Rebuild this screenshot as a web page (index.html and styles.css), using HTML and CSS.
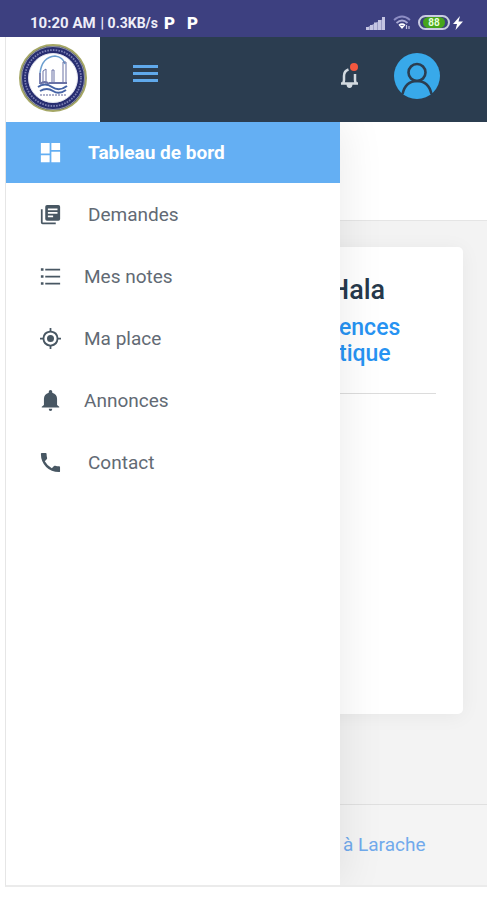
FILE: index.html
```html
<!DOCTYPE html>
<html lang="fr">
<head>
    <meta charset="UTF-8">
    <meta name="viewport" content="width=device-width, initial-scale=1.0">
    <title>Tableau de bord</title>
    <link rel="stylesheet" href="styles.css">
</head>
<body>
    <!-- Barre d'état -->
    <div class="status">
        <span class="time">10:20 AM</span>
        <span class="speed">| 0.3KB/s</span>
        <span class="app-mark">P</span>
        <span class="app-mark">P</span>
        <div class="status-right">
            <svg width="20" height="14" viewBox="0 0 20 14" fill="#c5c5e2"><path d="M0 11h3v3H0zM4 9h3v5H4zM8 6.500h3V14H8zM12 4h3v10h-3zM16 1h3v13h-3z"/><path d="M0 12 19 2v12H0z" opacity=".7"/></svg>
            <svg width="18" height="15" viewBox="0 0 18 15" fill="none" stroke-width="1.800"><path d="M1 5q8-7 16 0" stroke="#8d8dc4"/><path d="M3.500 8q5.500-5 11 0" stroke="#aaaad4"/><path d="M6 10.500q3-2.500 6 0" stroke="#fff"/><path d="m9 14-2.500-3h5z" fill="#fff"/><path d="M13.500 10v4M16 11v3" stroke="#c5c5e2" stroke-width="1.200"/></svg>
            <div class="power">
                <span class="battery">88</span>
                <svg width="10" height="14" viewBox="0 0 10 14" fill="#fff"><path d="M7 0 0 8h4l-1.500 6L10 5.500H5.500z"/></svg>
            </div>
        </div>
    </div>

    <div class="app">
        <header class="header">
            <a class="logo" href="#" aria-label="Accueil">
                <svg width="70" height="70" viewBox="0 0 70 70">
                    <circle cx="35" cy="35" r="33" fill="#272d70" stroke="#a5a765" stroke-width="2"/>
                    <circle cx="35" cy="35" r="31.500" fill="none" stroke="#d9dccb" stroke-width=".6"/>
                    <circle cx="35" cy="35" r="28" fill="none" stroke="#7c80b3" stroke-width="1.800" stroke-dasharray="1.600 1.200"/>
                    <circle cx="35" cy="35" r="24.500" fill="#fff" stroke="#e3e4ee"/>
                    <g fill="none" stroke="#6a72a5">
                        <path d="M22 30q2-16 15-17 8 1 10 8" stroke="#6c9fd0" stroke-width="1.500"/>
                        <path d="M22 30v11" stroke="#525b98" stroke-width="1.500"/>
                        <path d="M25 28v13M28 26v15M34 27v13M36 27v13M45 19v20M48 19v20M45 19h3M34 27h2M25 28l3-2"/>
                        <path d="M22 41q5-4 9 0M31 40h18" stroke-width="2"/>
                        <path d="M20 44q7-5 14 0t15-1M22 48q7-4 13 0t13-1" stroke="#4563a5" stroke-width="2"/>
                        <path d="M22 52h27" stroke="#aeb1cc" stroke-width="2" stroke-dasharray="2 1"/>
                    </g>
                </svg>
            </a>
            <button class="menu-btn" aria-label="Menu">
                <svg width="25" height="17" viewBox="0 0 25 17" fill="#60a9eb"><path d="M0 0h25v3H0zM0 7h25v3H0zM0 14h25v3H0z"/></svg>
            </button>
            <div class="header-right">
                <button class="bell-btn" aria-label="Notifications">
                    <svg width="20" height="26" viewBox="0 0 20 26"><path d="M3 20q1-1 1-3v-4q0-5 4.500-6.500M15 11v6q0 2 1 3M1 20.500h17" fill="none" stroke="#d3dae0" stroke-width="2.500"/><path d="M6.500 21h6q0 4-3 4t-3-4z" fill="#d3dae0"/><circle cx="14" cy="4" r="4" fill="#f4583f"/></svg>
                </button>
                <button class="avatar" aria-label="Profil">
                    <svg width="46" height="46" viewBox="0 0 46 46"><circle cx="23" cy="23" r="23" fill="#38a9ea"/><g fill="none" stroke="#2b3d50" stroke-width="2.600"><circle cx="23" cy="19.500" r="8.500"/><path d="M8.500 41q3-13 14.500-13t14.500 13"/></g></svg>
                </button>
            </div>
        </header>

        <div class="content">
            <!-- Menu latéral -->
            <nav class="sidebar">
                <a class="item wide active" href="#">
                    <svg viewBox="0 0 24 24"><path d="M1 1h10v12H1zM1 15h10v8H1zM13 1h10v8H13zM13 11h10v12H13z"/></svg>
                    Tableau de bord
                </a>
                <a class="item wide" href="#">
                    <svg viewBox="0 0 24 24"><path d="M4 6H1v15q0 2 2 2h15v-2H3V6zM21 1H8Q6 1 6 3v14q0 2 2 2h13q2 0 2-2V3q0-2-2-2zM20 11H9V9h11zM15 15H9v-2h6zM20 7H9V5h11z" fill-rule="evenodd"/></svg>
                    Demandes
                </a>
                <a class="item" href="#">
                    <svg viewBox="0 0 24 24"><path d="M6 3h17v2H6zM6 11h17v2H6zM6 19h17v2H6zM1 2.500h3v3H1zM1 10.500h3v3H1zM1 18.500h3v3H1z"/></svg>
                    Mes notes
                </a>
                <a class="item" href="#">
                    <svg viewBox="0 0 24 24"><path d="M12 8a4 4 0 1 0 0 8 4 4 0 0 0 0-8zm9 3A9 9 0 0 0 13 3V0h-2v3a9 9 0 0 0-8 8H0v2h3a9 9 0 0 0 8 8v3h2v-3a9 9 0 0 0 8-8h3v-2zm-9 8a7 7 0 1 1 0-14 7 7 0 0 1 0 14z"/></svg>
                    Ma place
                </a>
                <a class="item" href="#">
                    <svg viewBox="0 0 24 24"><path d="M12 24q2 0 2-2.500h-4q0 2.500 2 2.500zM19.500 17v-7q0-5.500-5.500-7V2q0-2-2-2t-2 2v1q-5.500 1.500-5.500 7v7L2 19v1h20v-1z"/></svg>
                    Annonces
                </a>
                <a class="item wide" href="#">
                    <svg viewBox="0 0 24 24"><path d="M5.500 10.500q3 5.500 8 8l2.500-2.500q.6-.6 1.400-.2 2 .6 4.500.6 1 0 1 1v4.500q0 1-1 1Q13 23 7 17T1 2q0-1 1-1h4.500q1 0 1 1 0 2.500.6 4.500.2.800-.2 1.400z"/></svg>
                    Contact
                </a>
            </nav>

            <div class="topbar"></div>
            <main class="page">
                <section class="card">
                    <h1>Hala</h1>
                    <h2>ences<br>tique</h2>
                    <hr>
                </section>
            </main>
            <footer class="footer"><a href="#">à Larache</a></footer>
        </div>
    </div>
</body>
</html>
```
FILE: styles.css
```css
* { box-sizing: border-box; }
body { margin: 0; background: #fff; font-family: Roboto, sans-serif; color: #5f6872; }
a { text-decoration: none; }
button { background: none; border: none; padding: 0; cursor: pointer; }
svg { display: block; flex: none; }

/* Barre d'état */
.status { display: flex; align-items: center; height: 37px; padding: 8px 24px 0 30px; background: #3d4080; color: #eeeef8; font-weight: 700; white-space: nowrap; }
.time { margin-right: 5px; font-size: 15px; }
.speed { margin-right: 6px; font-size: 14px; }
.app-mark { width: 23px; color: #fff; font-size: 17px; font-weight: 900; }
.status-right { display: flex; align-items: center; gap: 7px; margin-left: auto; }
.power { display: flex; align-items: center; gap: 3px; }
.battery { width: 32px; height: 15px; border: 2px solid #c9cbe2; border-radius: 8px; background: #46a51b; box-shadow: inset 3px 0 #3d4080, inset -3px 0 #3d4080; color: #e5ffd9; font-size: 10px; font-weight: 700; line-height: 11px; text-align: center; }

.app { margin-left: 5px; border-left: 1px solid #e6e6e6; border-bottom: 2px solid #ebebeb; }

/* En-tête */
.header { display: flex; align-items: center; height: 85px; background: #2b3d50; }
.logo { display: flex; justify-content: center; width: 94px; height: 85px; padding-top: 6px; background: #fff; }
.menu-btn { margin: 0 0 12px 33px; }
.header-right { display: flex; align-items: center; gap: 34px; margin: 0 47px 8px auto; }

/* Menu latéral */
.content { position: relative; }
.sidebar { position: absolute; top: 0; bottom: 0; left: 0; width: 334px; background: #fff; box-shadow: 4px 0 40px rgba(0, 0, 0, .08); clip-path: inset(0 -60px 0 0); }
.item { display: flex; align-items: center; gap: 23px; height: 60px; margin-bottom: 2px; padding-left: 34px; color: #626a74; font-size: 19px; }
.item.wide { gap: 27px; }
.item svg { width: 21px; height: 21px; fill: #485763; }
.item.active { height: 61px; margin-bottom: 1px; background: #64aff3; color: #fff; font-weight: 700; }
.item.active svg { fill: #fff; }

/* Contenu */
.topbar { height: 99px; background: #fff; border-bottom: 1px solid #e5e5e5; }
.page { padding: 26px 24px 90px; background: #f3f3f3; }
.card { min-height: 467px; padding: 26px 27px; background: #fff; border-radius: 5px; box-shadow: 0 2px 20px rgba(0, 0, 0, .05); }
.card h1 { margin: 0; padding-left: 300px; color: #26394b; font-size: 27px; font-weight: 500; line-height: 34px; }
.card h1, .card h2 { margin-left: -27px; }
.card h2 { margin-top: 8px; margin-bottom: 26px; padding-left: 309px; color: #2793f2; font-size: 23px; font-weight: 500; line-height: 26px; }
.card hr { margin: 0; border: 0; border-top: 1px solid #dcdcdc; }
.footer { height: 81px; padding: 28px 0 0 337px; border-top: 1px solid #e0e0e0; background: #f4f4f4; font-size: 19px; line-height: 24px; }
.footer a { color: #71aaec; }
```
